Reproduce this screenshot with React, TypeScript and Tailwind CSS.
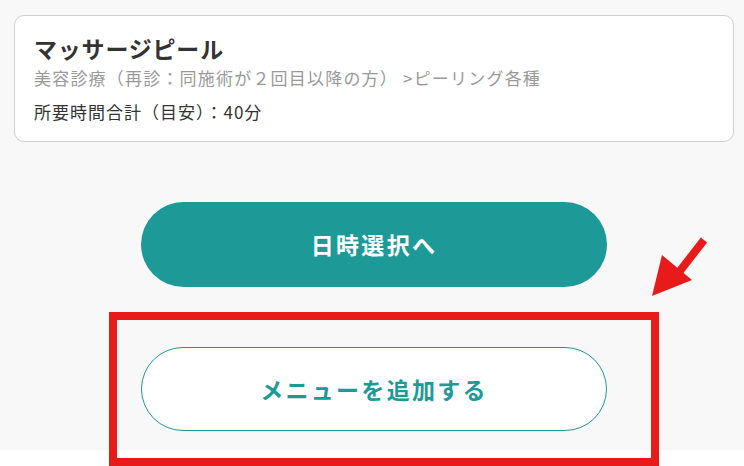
import React from 'react';

const MenuCard: React.FC = () => (
  <div className="ml-[14px] mr-[10px] h-[127px] rounded-[10px] border border-[#cfcfcf] bg-white px-[19px] pt-[17px]">
    <h2 className="text-[23px] font-bold leading-[30px] tracking-[0.8px] text-[#333333]">マッサージピール</h2>
    <p className="mt-[3px] text-[17px] leading-[24px] tracking-[1.2px] text-[#999999]">
      美容診療（再診：同施術が２回目以降の方）&nbsp;&gt;ピーリング各種
    </p>
    <p className="mt-[10px] text-[17px] leading-[24px] tracking-[1px] text-[#333333]">所要時間合計（目安）：40分</p>
  </div>
);

export default function App() {
  return (
    <div className="relative min-h-[466px] bg-white font-['Noto_Sans_CJK_JP','Noto_Sans',sans-serif]">
      <div className="flex h-[450px] flex-col bg-[#f8f8f8] pt-[15px]">
        <MenuCard />

        <div className="mt-[60px] flex flex-col items-center gap-[60px] pl-[4px]">
          <button className="flex h-[85px] w-[466px] items-center justify-center rounded-full bg-[#1d9a98] text-[23px] font-bold tracking-widest text-white">
            日時選択へ
          </button>
          <button className="flex h-[84px] w-[466px] items-center justify-center rounded-full border border-[#1d9a98] bg-white text-[23px] font-bold tracking-widest text-[#1d9a98]">
            メニューを追加する
          </button>
        </div>
      </div>

      {/* annotation overlay */}
      <div className="absolute left-[109px] top-[312px] h-[154px] w-[550px] border-[8px] border-[#e81b1b]" />
      <svg className="absolute left-[640px] top-[230px]" width="80" height="80" viewBox="0 0 80 80">
        <line x1="64" y1="10" x2="36" y2="46" stroke="#e81b1b" strokeWidth="8" />
        <polygon points="12,66 22,25 52,50" fill="#e81b1b" />
      </svg>
    </div>
  );
}
